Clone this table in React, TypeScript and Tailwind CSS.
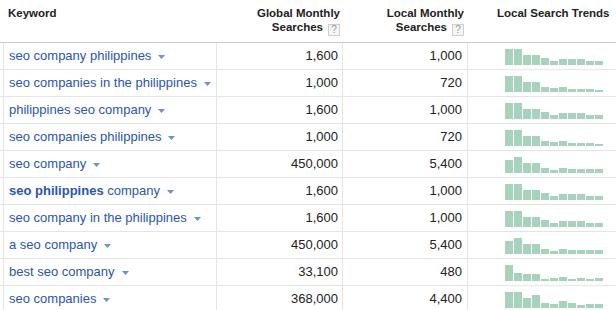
import React from "react";

type Row = { k: React.ReactNode; g: string; l: string; t: number[] };

const A = [16, 16, 10, 10, 7, 4, 6, 6, 6, 4, 4];
const B = [16, 16, 10, 10, 5, 4, 5, 3, 3, 3, 2];
const C = [13, 16, 10, 10, 5, 3, 5, 4, 4, 4, 4];

const rows: Row[] = [
  { k: "seo company philippines", g: "1,600", l: "1,000", t: A },
  { k: "seo companies in the philippines", g: "1,000", l: "720", t: B },
  { k: "philippines seo company", g: "1,600", l: "1,000", t: A },
  { k: "seo companies philippines", g: "1,000", l: "720", t: B },
  { k: "seo company", g: "450,000", l: "5,400", t: C },
  {
    k: (
      <>
        <span className="font-bold">seo philippines</span> company
      </>
    ),
    g: "1,600",
    l: "1,000",
    t: A,
  },
  { k: "seo company in the philippines", g: "1,600", l: "1,000", t: A },
  { k: "a seo company", g: "450,000", l: "5,400", t: C },
  { k: "best seo company", g: "33,100", l: "480", t: [16, 8, 7, 7, 2, 3, 4, 2, 3, 2, 3] },
  { k: "seo companies", g: "368,000", l: "4,400", t: [16, 16, 10, 13, 5, 4, 7, 5, 3, 4, 4] },
];

function Help() {
  return (
    <span className="inline-flex items-center justify-center w-[12px] h-[12px] ml-[5px] border border-[#cfcfcf] bg-[#f6f6f6] text-[#999] text-[10px] leading-none font-normal align-[-2px]">
      ?
    </span>
  );
}

function Arrow() {
  return (
    <svg width="7" height="4" viewBox="0 0 7 4" className="ml-[7px] mt-[1px] shrink-0">
      <path d="M0 0H7L3.5 4Z" fill="#6a92d4" />
    </svg>
  );
}

export default function App() {
  return (
    <div
      className="w-[616px] h-[310px] overflow-hidden bg-white text-[#222]"
      style={{ fontFamily: '"Liberation Sans", Arial, sans-serif' }}
    >
      <div className="flex h-[43px] border-b border-[#cccccc] text-[11.5px] leading-[14px] font-bold text-[#222]">
        <div className="w-[217px] pl-[8px] pt-[6px]">Keyword</div>
        <div className="w-[126px] pr-[3px] pt-[6px] text-right">
          Global Monthly
          <br />
          Searches
          <Help />
        </div>
        <div className="w-[125px] pr-[4px] pt-[6px] text-right">
          Local Monthly
          <br />
          Searches
          <Help />
        </div>
        <div className="flex-1 pl-[29px] pt-[6px] whitespace-nowrap">Local Search Trends</div>
      </div>
      {rows.map((r, i) => (
        <div key={i} className="flex h-[27px] border-b border-[#e5e5e5] text-[13px]">
          <div className="ml-[3px] w-[214px] border-l border-r border-[#e5e5e5] pl-[5px] flex items-center text-[#2b55b0] whitespace-nowrap">
            <span>{r.k}</span>
            <Arrow />
          </div>
          <div className="w-[126px] border-r border-[#e5e5e5] pr-[4px] flex items-center justify-end">
            {r.g}
          </div>
          <div className="w-[125px] border-r border-[#e5e5e5] pr-[5px] flex items-center justify-end">
            {r.l}
          </div>
          <div className="flex-1 pl-[37px] pb-[4px] flex items-end gap-[1px]">
            {r.t.map((h, j) => (
              <div key={j} className="w-[8px] bg-[#a7d2bc]" style={{ height: h }} />
            ))}
          </div>
        </div>
      ))}
    </div>
  );
}
